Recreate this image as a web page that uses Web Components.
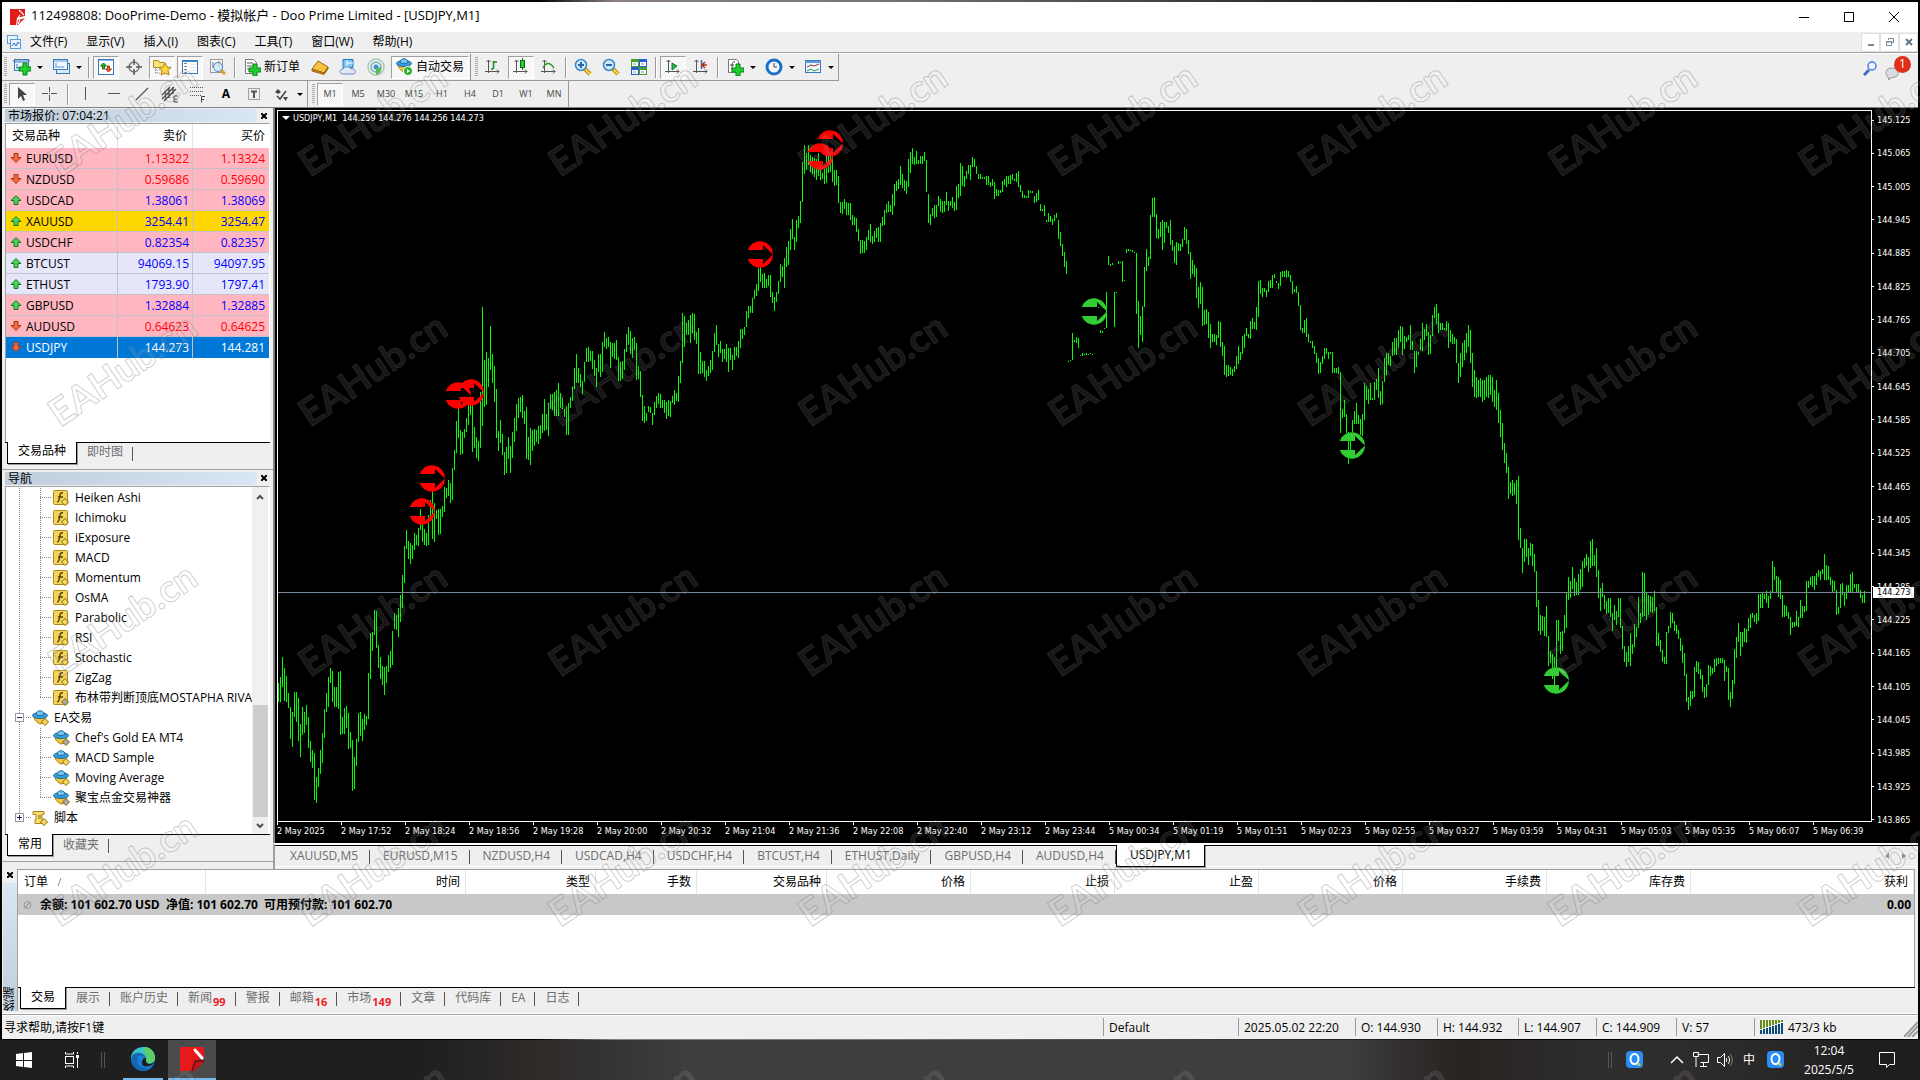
<!DOCTYPE html>
<html lang="zh-CN">
<head>
<meta charset="utf-8">
<title>112498808: DooPrime-Demo - 模拟帐户 - Doo Prime Limited - [USDJPY,M1]</title>
<style>
html, body { height: 100%; margin: 0; }
body { background: #000; font: 12px/20px "Open Sans", "Noto Sans CJK SC", sans-serif; color: #000; overflow: hidden; }
</style>
</head>
<body>
<trading-desktop></trading-desktop>
<script>
const BASE = `<style>
*{box-sizing:border-box}
:host{display:block}
button{font:inherit;color:inherit;background:none;border:0;padding:0;margin:0;display:flex;align-items:center;justify-content:center;white-space:nowrap}
svg{display:block;flex:none}
a{color:inherit;text-decoration:none}
</style>`;

function define(name, render, after) {
  customElements.define(name, class extends HTMLElement {
    connectedCallback() {
      if (this.shadowRoot) return;
      const root = this.attachShadow({ mode: 'open' });
      const t = document.createElement('template');
      t.innerHTML = BASE + render(this);
      root.append(t.content.cloneNode(true));
      if (after) after(this, root);
    }
  });
}

/* ---------- icons ---------- */
const svg = (w, h, body) => `<svg width="${w}" height="${h}" viewBox="0 0 ${w} ${h}" fill="none" aria-hidden="true">${body}</svg>`;
const PLUS = (x, y) => `<path d="M${x + 4} ${y}h4v4h4v4h-4v4h-4v-4h-4v-4h4z" fill="#1fd02c" stroke="#078012"/>`;
const AXES = '<path d="M4.500 2v13M1 13.500h14M2.500 4l2-2 2 2M13 11.500l2 2-2 2" stroke="#555"/>';
const DIA = (x, y, c) => `<path d="M${x} ${y - 3.5}l3.500 3.500-3.500 3.500-3.500-3.500z" fill="${c}" stroke="#8a6a12"/>`;
const GLASS = m => svg(18, 18, `<path d="M11 11l5 5" stroke="#b8860b" stroke-width="4"/><path d="M11 11l5 5" stroke="#ffd84a" stroke-width="2"/><circle cx="7" cy="7" r="5.500" fill="#cfe9fb" stroke="#3a86c4" stroke-width="1.500"/>${m}`);
const HAT = (x, y) => `<g transform="translate(${x} ${y})"><path d="M2 6c0 5 4 7 6 8l4-1 2-7z" fill="#f0c63a" stroke="#a88010"/><ellipse cx="8" cy="5.500" rx="7.500" ry="3" fill="#3a9edb" stroke="#1c6a9c"/><path d="M4 4.500c0-5 8-5 8 0-2 1.500-6 1.500-8 0z" fill="#74c4f0" stroke="#1c6a9c"/></g>`;
const WIN = '<rect x="1.500" y="2.500" width="15" height="12" fill="#eef6ff" stroke="#3a78b8"/><path d="M1 3h16v2H1z" fill="#5a9ad8"/>';
const ICON = {
  logo: svg(16, 16, '<path d="M0 0h9l6 0v7l-8 2-1 7H0z" fill="#e21b1b"/><path d="M15 9l-7 7h-1l1-5z" fill="#e21b1b"/><path d="M9 1l5 5M10 6l-2 3 7-1M8 15l2-4" stroke="#fff" stroke-width="1.200"/>'),
  mdi: svg(16, 16, '<rect x="1.500" y="1.500" width="10" height="8" fill="#e8f2ff" stroke="#5b9bd8"/><rect x="4.500" y="5.500" width="10" height="9" fill="#e8f2ff" stroke="#5b9bd8"/><path d="M6 12l2-3 2 3 2-4 1 2" stroke="#2c6db8"/>'),
  newchart: svg(18, 18, '<rect x="1.500" y="1.500" width="14" height="11" fill="#eef6ff" stroke="#3a78b8"/><path d="M1 2h15v2H1zM4 6v4M3 10h9" stroke="#3a78b8"/>' + PLUS(6, 5)),
  profiles: svg(18, 18, '<rect x="4.500" y="5.500" width="13" height="10" fill="#dcebfa" stroke="#3a78b8"/><rect x="1.500" y="1.500" width="14" height="10" fill="#eef6ff" stroke="#3a78b8"/><path d="M2 3h13M4 5v4M3 9h9" stroke="#5a9ad8"/>'),
  market: svg(18, 18, '<rect x="1.500" y="1.500" width="15" height="15" fill="#fff" stroke="#3a78b8"/><path d="M2 2.500h14" stroke="#8abaf0" stroke-width="1"/><path d="M6.500 5l3 3h-2v3h-2V8h-2z" fill="#2db52d" stroke="#117011"/><path d="M11.500 14l3-3h-2V8h-2v3h-2z" fill="#f06030" stroke="#a03010"/>'),
  cross: svg(18, 18, '<circle cx="9" cy="9" r="5" stroke="#777" stroke-width="1.500"/><path d="M9 1v6M9 11v6M1 9h6M11 9h6" stroke="#555" stroke-width="1.500"/>'),
  folder: svg(20, 18, '<path d="M1.500 2.500h5l1 2h5v5h-11z" fill="#fbe27a" stroke="#b8902a"/><path d="M3.500 10v5h5M3.500 12h5" stroke="#777" stroke-dasharray="1 1"/><path d="M13 5l2 4 4 .5-3 3 1 4.500-4-2-4 2 1-4.500-3-3 4-.5z" fill="#ffd840" stroke="#b07a10"/>'),
  window: svg(18, 18, '<rect x="1.500" y="2.500" width="15" height="13" fill="#fff" stroke="#3a78b8"/><path d="M2 3h14v1H2z" fill="#3a8ad8"/><path d="M4.500 5v10" stroke="#444" stroke-width="2" stroke-dasharray="1 2"/><path d="M8 6.500h7M8 9.500h7M8 12.500h7" stroke="#dde8f4"/>'),
  tester: svg(18, 18, '<rect x="1.500" y="1.500" width="12" height="13" fill="#f4f4f4" stroke="#999"/><path d="M4 4v6M10 3v6" stroke="#777"/><path d="M12 12l4 4" stroke="#d8a020" stroke-width="3"/><circle cx="9" cy="9" r="4.500" fill="#cfe6fa" fill-opacity=".8" stroke="#4a8ac0"/>'),
  order: svg(18, 18, '<path d="M2.500 1.500h8l3 3v11h-11z" fill="#fff" stroke="#777"/><path d="M4 5h6M4 8h6M4 11h4" stroke="#555"/>' + PLUS(6, 6)),
  gold: svg(18, 18, '<path d="M1 11l6-8 10 6-4 6z" fill="#f6c040" stroke="#9a6a10"/><path d="M1 11l12 4 4-6v2l-4 5.500L1 13z" fill="#c88a1a" stroke="#9a6a10"/>'),
  cloud: svg(18, 18, '<path d="M4 1.500h10v8H4z" fill="#7ec8f8" stroke="#1878c8"/><path d="M8 2v8M8 5h6" stroke="#fff"/><path d="M4 16c-4 0-4-5 0-5 1-3 7-3 8 0 5-1 6 5 2 5z" fill="#dfe9f6" stroke="#6a8ab8"/>'),
  signal: svg(20, 18, '<circle cx="10" cy="9" r="8" stroke="#a8c8b8" stroke-width="1.500"/><circle cx="10" cy="9" r="5" stroke="#7ab0b8" stroke-width="1.500"/><circle cx="10" cy="9" r="2.500" fill="#3a90d8"/><path d="M10 10v7c4-1 6-4 5-8z" fill="#5cbc5c"/>'),
  auto: svg(18, 18, HAT(1, 0) + '<circle cx="13" cy="13" r="4.500" fill="#2cb030" stroke="#fff"/><path d="M12 11l3 2-3 2z" fill="#fff"/>'),
  bars: svg(18, 18, AXES + '<path d="M9.500 3v8M7 11h2M10 4h3" stroke="#1a8a1a" stroke-width="1.500"/>'),
  candle: svg(18, 18, AXES + '<path d="M10.500 0v12" stroke="#087008"/><rect x="8.500" y="2.500" width="4" height="7" fill="#2cd03c" stroke="#087008"/>'),
  line: svg(18, 18, AXES + '<path d="M3 10c3-6 7-6 11 0" stroke="#2a9a2a" stroke-width="1.500"/>'),
  zin: GLASS('<path d="M7 4v6M4 7h6" stroke="#2868a8" stroke-width="2"/>'),
  zout: GLASS('<path d="M4 7h6" stroke="#2868a8" stroke-width="2"/>'),
  tile: svg(18, 18, '<path d="M1 1h8v8H1zM9 9h8v8H9z" fill="#4aa020"/><path d="M9 1h8v8H9zM1 9h8v8H1z" fill="#2a5ad0"/><path d="M2 4h6v4H2zM10 4h6v4h-6zM2 12h6v4H2zM10 12h6v4h-6z" fill="#f4f8ff"/><path d="M3 6h3M11 6h3M3 14h3M11 14h3" stroke="#89a"/>'),
  scroll: svg(18, 18, AXES + '<path d="M8 5l5 3-5 4z" fill="#2cb84c" stroke="#0a7a20"/>'),
  shift: svg(18, 18, AXES + '<path d="M9.500 2v9" stroke="#2868a8" stroke-width="1.500"/><path d="M15 7h-5M13 4l-3 3 3 3" stroke="#b83010" stroke-width="1.500"/>'),
  indic: svg(18, 18, '<path d="M2.500 1.500h8l2 2v11h-10z" fill="#fff" stroke="#777"/><path d="M9 4c-3-1-3 2-3 8M4 7h4" stroke="#444"/>' + PLUS(6, 6)),
  clock: svg(18, 18, '<circle cx="9" cy="9" r="7" fill="#f2f8ff" stroke="#1a70c8" stroke-width="3"/><path d="M9 5v4h3" stroke="#444"/>'),
  template: svg(18, 18, WIN + '<path d="M3 9l4-2 3 1 5-2" stroke="#a03020"/><path d="M3 13l4-2 3 2 5-2" stroke="#2a9a3a"/>'),
  cursor: svg(12, 16, '<path d="M2 1v12l3-3 2 5 2-1-2-5h4z" fill="#444"/>'),
  hair: svg(18, 18, '<path d="M8.500 2v5M8.500 10v6M1 8.500h6M10 8.500h6M8 8.500h1" stroke="#555"/>'),
  vline: svg(18, 18, '<path d="M8.500 2v13" stroke="#555"/>'),
  hline: svg(18, 18, '<path d="M3 8.500h12" stroke="#555"/>'),
  trend: svg(18, 18, '<path d="M3 15L15 3" stroke="#555" stroke-width="1.200"/>'),
  channel: svg(18, 18, '<path d="M1 14L13 2M3 16L15 4M1 10l8-8M4 6l1 9M8 3v10M12 2v7" stroke="#444" stroke-width="1.200"/><path d="M17 11h-4v6h4M13 14h3" stroke="#444"/>'),
  fibo: svg(18, 18, '<path d="M1 2.500h14M1 6.500h14M1 10.500h11" stroke="#555" stroke-dasharray="1 1"/><path d="M16 11.500h-3.500v6M12 14.500h3" stroke="#444"/>'),
  tbox: svg(18, 18, '<rect x="3.500" y="3.500" width="11" height="11" stroke="#555" stroke-dasharray="1 1"/><path d="M6 6.500h6M9 6v7" stroke="#555" stroke-width="2"/>'),
  arrows: svg(18, 18, '<path d="M2 7l3-3 3 3-3 2zM10 12h5l-2.500 4z" fill="#444"/><path d="M4 11l3 3 6-8" stroke="#444" stroke-width="1.500"/>'),
  search: svg(16, 16, '<path d="M6 10l-5 5" stroke="#3a68c8" stroke-width="3"/><circle cx="9" cy="6" r="4" fill="#eef4ff" stroke="#4a7ae0" stroke-width="1.500"/>'),
  down: svg(12, 12, '<path d="M4 1.500h4v4h3L6 10.500 1 5.500h3z" fill="#f06840" stroke="#a83c14"/>'),
  up: svg(12, 12, '<path d="M4 10.500h4v-4h3L6 1.500 1 6.500h3z" fill="#4cd060" stroke="#147a20"/>'),
  fx: svg(16, 16, '<rect x=".5" y=".5" width="14" height="14" rx="1" fill="#f2d45c" stroke="#b08a1a"/><path d="M10 3c-3-1-3 2-3.500 5S5 12 4 12M5 7h5" stroke="#5a4608" stroke-width="1.500"/>' + DIA(12, 12, '#f6d860')),
  fxg: svg(16, 16, '<rect x=".5" y=".5" width="14" height="14" rx="1" fill="#f2d45c" stroke="#b08a1a"/><path d="M10 3c-3-1-3 2-3.500 5S5 12 4 12M5 7h5" stroke="#5a4608" stroke-width="1.500"/>' + DIA(12, 12, '#a8a8a8')),
  ea: svg(17, 16, HAT(0, 0) + DIA(13, 12, '#f6d860')),
  eag: svg(17, 16, HAT(0, 0) + DIA(13, 12, '#a8a8a8')),
  script: svg(16, 16, '<path d="M1 1.500h11v3h-2v5h3v4H3v-4h1v-5H1z" fill="#f8dc70" stroke="#a8841a"/><path d="M6 6h3M6 8h3" stroke="#86680e"/>' + DIA(12, 12, '#f6d860')),
  q: svg(18, 18, '<rect width="17" height="17" rx="4" fill="#2a8cf4"/><ellipse cx="8.500" cy="8" rx="4" ry="5" stroke="#fff" stroke-width="2"/><circle cx="13" cy="13.500" r="1.500" fill="#a8e040"/>'),
  start: svg(16, 16, '<path d="M0 2l7-1v7H0zM8 1l8-1v8H8zM0 9h7v6l-7-1zM8 9h8v7l-8-1z" fill="#fff"/>'),
  tasks: svg(18, 18, '<rect x="2.500" y="5.500" width="8" height="7" stroke="#fff"/><path d="M2.500 1v2h8V1M2.500 17v-2h8v2M14.500 1v2M14.500 7v10" stroke="#fff"/><path d="M13 4h3v3h-3z" fill="#fff"/>'),
  edge: svg(26, 26, '<circle cx="13" cy="13" r="12" fill="#1a7fd4"/><path d="M1 12C2-2 25-3 25 12c0 6-8 7-9 3 2-5-5-7-8-3-2 0-5 1-7 0z" fill="#3ac4c8"/><path d="M14 1c8 0 11 6 11 11 0 6-8 7-9 3 3-3-2-6-2-14z" fill="#5cd068"/><path d="M8 12c-3 6 3 12 13 10-5 5-18 4-20-9 1-5 4-7 9-6 3 0 6 3 6 6-2-4-7-4-8-1z" fill="#1466b4"/><path d="M16 15c0 4 6 4 9 0-2 6-14 8-13 1 0-3 2-4 4-4z" fill="#1e1e1e"/>'),
  doo: svg(24, 24, '<path d="M0 0h24v12l-9 1-4 11H0z" fill="#e8191b"/><path d="M24 13v2l-9 9h-3l3-10z" fill="#c41416"/><path d="M15 3l7 8" stroke="#fff" stroke-width="3" stroke-linecap="round"/><path d="M12 24l3-10h9" stroke="#3a0a0a"/>'),
  net: svg(18, 18, '<path d="M5.500 3.500h11v8h-8M11.500 12v3M8 15.500h7M1.500 1.500h5v4h-5zM4 6v10" stroke="#fff"/>'),
  vol: svg(18, 18, '<path d="M1.500 6.500h3l4-4v13l-4-4h-3z" stroke="#fff"/><path d="M10 7c1 1 1 3 0 4M12 5c2 2 2 6 0 8" stroke="#fff"/><path d="M14 3c3 3 3 9 0 12" stroke="#888"/>'),
  chev: svg(14, 14, '<path d="M1 10l6-6 6 6" stroke="#fff" stroke-width="1.500"/>'),
  note: svg(18, 18, '<path d="M1.500 1.500h15v12h-5l-3 3v-3h-7z" stroke="#fff"/>'),
};
ICON.volume = svg(24, 14, Array.from({ length: 8 }, (_, i) => `<path d="M${i * 3 + 1} 0v${9 - i}" stroke="#6a8a1a" stroke-width="2"/><path d="M${i * 3 + 1} ${10 - i}V14" stroke="#0a4a78" stroke-width="2"/>`).join(''));

/* ---------- window chrome ---------- */
define('title-bar', () => `<style>
:host{display:flex;height:30px;background:#fff;align-items:center;padding:0 2px 0 8px}
.t{flex:1;padding-left:5px;height:28px;font-size:13px;line-height:24px}
button{width:45px;height:30px}
</style>${ICON.logo}<div class="t"><slot></slot></div>
<button aria-label="最小化">${svg(10, 10, '<path d="M0 5.500h10" stroke="#000"/>')}</button>
<button aria-label="最大化">${svg(10, 10, '<path d="M.5.5h9v9h-9z" stroke="#000"/>')}</button>
<button aria-label="关闭">${svg(10, 10, '<path d="M0 0l10 10M10 0L0 10" stroke="#000"/>')}</button>`);

define('menu-bar', () => `<style>
:host{display:flex;height:21px;background:#efefef;border-bottom:1px solid #a0a0a0;align-items:center;padding-left:4px}
nav{display:flex;gap:19px;padding-left:8px;flex:1;line-height:18px}
.m{width:19px;height:19px;background:#fff;border:1px solid #e0e0e0}
</style>${ICON.mdi}<nav>${['文件(F)', '显示(V)', '插入(I)', '图表(C)', '工具(T)', '窗口(W)', '帮助(H)'].map(t => `<button>${t}</button>`).join('')}</nav>
<button class="m" aria-label="最小化图表">${svg(10, 10, '<path d="M2 8h6" stroke="#789" stroke-width="2"/>')}</button>
<button class="m" aria-label="还原图表">${svg(10, 10, '<path d="M3.500 3V1.500h5v4H7M1.500 4.500h5v4h-5zM1 5h6" stroke="#789"/>')}</button>
<button class="m" aria-label="关闭图表">${svg(10, 10, '<path d="M2 2l6 6M8 2L2 8" stroke="#678" stroke-width="2"/>')}</button>`);

define('tool-grip', () => `<style>:host{width:3px;height:20px;margin:0 1px 0 2px;background:repeating-linear-gradient(#aaa 0 1px,#efefef 1px 2px)}</style>`);
define('tool-sep', () => `<style>:host{width:2px;height:21px;margin:0 2px;background:linear-gradient(90deg,#999 50%,#fff 50%)}:host([wide]){margin:0 3px}</style>`);
define('tool-button', el => `<style>
:host{flex:none;width:26px;margin:0 1px}
:host([menu]){width:35px;margin:0 2px}
:host([label]){width:auto}
button{width:100%;height:23px;border:1px solid transparent;gap:3px}
:host([pressed]) button{background:repeating-conic-gradient(#fff 0 25%,#f0f0f0 0 50%) 0 0/2px 2px;border-color:#a0a0a0 #fff #fff #a0a0a0}
:host([text]) button{font-size:9px;color:#444}
:host([label]) button{padding:0 4px 0 3px}
i{width:0;border:3px solid transparent;border-top-color:#000;border-bottom:0;margin-left:3px}
b{font-size:12px;color:#555;font-weight:600}
</style><button ${el.hasAttribute('label') || el.hasAttribute('text') ? '' : `aria-label="${el.getAttribute('icon')}"`} ${el.hasAttribute('pressed') ? 'aria-pressed="true"' : ''}>${ICON[el.getAttribute('icon')] || ''}${el.getAttribute('label') || el.getAttribute('text') || ''}<slot></slot>${el.hasAttribute('menu') ? '<i></i>' : ''}</button>`);

define('tool-row', () => `<style>
:host{display:flex;height:27px;align-items:center;background:#efefef}
:host([last]){height:26px}
.g{display:flex;height:100%;align-items:center;border-right:1px solid #999;border-bottom:1px solid #999}
:host([last]) .g{border-bottom:0}
.g+.g{padding-left:2px}
</style><div class="g"><slot></slot></div><div class="g"><slot name="second"></slot></div><slot name="end"></slot>`);

define('alert-tools', () => `<style>
:host{display:flex;margin-left:auto;gap:6px;padding-right:5px;align-items:center}
.c{position:relative;width:28px;height:24px;align-items:end;justify-content:start}
span{position:absolute;right:2px;top:0;width:17px;height:17px;border-radius:9px;background:#e0301c;color:#fff;line-height:16px;text-align:center}
</style><button aria-label="搜索">${ICON.search}</button><button class="c">${svg(14, 14, '<path d="M3 11c-4-3-2-9 4-9s9 7 3 9l-5 1-1 2z" fill="#dcdce4" stroke="#999"/>')}<span>1</span></button>`);

define('main-toolbars', () => {
  const b = (icon, extra = '') => `<tool-button icon="${icon}" ${extra}></tool-button>`;
  const tf = (t, p = '') => `<tool-button text="${t}" ${p}></tool-button>`;
  return `<style>:host{background:#efefef;border-top:1px solid #fff;border-bottom:1px solid #808080}
.s{display:flex;height:26px;align-items:center}</style>
<tool-row><div class="s"><tool-grip></tool-grip>${b('newchart', 'menu')}${b('profiles', 'menu')}<tool-sep></tool-sep>${b('market', 'pressed')}${b('cross')}${b('folder', 'pressed')}${b('window', 'pressed')}${b('tester')}<tool-sep></tool-sep>${b('order', 'label="新订单"')}${b('gold')}${b('cloud')}${b('signal')}${b('auto', 'pressed label="自动交易"')}</div>
<div class="s" slot="second"><tool-grip></tool-grip>${b('bars')}${b('candle', 'pressed')}${b('line')}<tool-sep></tool-sep>${b('zin')}${b('zout')}${b('tile')}<tool-sep></tool-sep>${b('scroll', 'pressed')}${b('shift')}<tool-sep></tool-sep>${b('indic', 'menu')}${b('clock', 'menu')}${b('template', 'menu')}</div>
<alert-tools slot="end"></alert-tools></tool-row>
<tool-row last><div class="s"><tool-grip></tool-grip>${b('cursor', 'pressed')}${b('hair')}<tool-sep wide></tool-sep>${b('vline')}${b('hline')}${b('trend')}${b('channel')}${b('fibo')}<tool-button icon="text"><b>A</b></tool-button>${b('tbox')}${b('arrows', 'menu')}</div>
<div class="s" slot="second"><tool-grip></tool-grip>${tf('M1', 'pressed')}${['M5', 'M30', 'M15', 'H1', 'H4', 'D1', 'W1', 'MN'].map(t => tf(t)).join('')}</div></tool-row>`;
});

/* ---------- tabs and docked panels ---------- */
define('tab-strip', el => {
  const tabs = el.getAttribute('tabs').split('|'), on = +(el.getAttribute('active') || 0);
  return `<style>
:host{display:flex;height:24px;background:#efefef;padding-left:2px;border-top:1px solid #000}
button{height:21px;padding:0 var(--pad,10px) 2px var(--lead,10px);color:#6e6e6e;position:relative;line-height:18px}
button:not(.on)::after{content:"";position:absolute;right:0;top:4px;height:14px;border-right:1px solid #555}
.on{background:#fff;color:#000;border:1px solid #000;border-top:0;margin-top:-1px;height:22px;box-shadow:1px 1px #999}
small{font-size:11px;font-weight:700;color:#ee1c24;line-height:10px;align-self:end;margin-left:1px}
</style>${tabs.map((t, i) => { const [n, c] = t.split('#'); return `<button role="tab" aria-selected="${i === on}" class="${i === on ? 'on' : ''}">${n}${c ? `<small>${c}</small>` : ''}</button>`; }).join('')}<slot></slot>`;
});

define('dock-panel', el => `<style>
:host{display:flex;flex-direction:column;background:#efefef;padding:1px 3px 3px;min-height:0}
:host([ruled]){border-top:1px solid #a0a0a0;padding-top:2px}
header{display:flex;height:13px;line-height:13px;margin-bottom:1px}
h2{margin:0;flex:1;font:inherit;padding-left:3px;background:linear-gradient(90deg,#bfcddb,#d9e6f3)}
button{width:13px}
.b{flex:1;min-height:0;background:#fff;border:1px solid #a0a0a0;border-right-color:#fff;border-bottom:0;overflow:hidden;display:flex;flex-direction:column}
.b ::slotted(*){flex:1;min-height:0}
</style><header><h2>${el.getAttribute('heading')}</h2><button aria-label="关闭">${svg(6, 6, '<path d="M0 0l6 6M6 0L0 6" stroke="#000" stroke-width="2"/>')}</button></header>
<div class="b"><slot></slot></div><tab-strip tabs="${el.getAttribute('tabs')}"></tab-strip>`);

const QUOTES = [
  ['EURUSD', '1.13322', '1.13324', 0, 'p'], ['NZDUSD', '0.59686', '0.59690', 0, 'p'], ['USDCAD', '1.38061', '1.38069', 1, 'p'],
  ['XAUUSD', '3254.41', '3254.47', 1, 'g'], ['USDCHF', '0.82354', '0.82357', 1, 'p'], ['BTCUST', '94069.15', '94097.95', 1, 'l'],
  ['ETHUST', '1793.90', '1797.41', 1, 'l'], ['GBPUSD', '1.32884', '1.32885', 1, 'p'], ['AUDUSD', '0.64623', '0.64625', 0, 'p'],
  ['USDJPY', '144.273', '144.281', 0, 's']];
define('market-watch', () => `<style>
table{width:100%;border-collapse:separate;border-spacing:0;table-layout:fixed}
th{font-weight:400;height:24px;padding:0 5px;text-align:right;border-right:1px solid #e4e4e4;line-height:20px}
th:first-child{text-align:left;width:112px;padding-left:6px}
td{height:21px;padding:0 3px 0 0;line-height:19px;text-align:right;color:#f00;border-right:1px solid #c8c0c8;border-bottom:1px solid #c8c0c8}
th:nth-child(2){width:75px}
td:last-child,th:last-child{padding-right:4px;border-right:0}
td:first-child{color:#000}
.n{display:flex;align-items:center;gap:4px;padding-left:4px;height:20px}
.u td+td{color:#00f}
.p{background:#ffb6c1}.g{background:#ffd700}.l{background:#e6e6fa}.s{background:#0078d7}
tr.s td{color:#fff;border-bottom-color:#0078d7}
</style><table><thead><tr><th>交易品种</th><th>卖价</th><th>买价</th></tr></thead><tbody>
${QUOTES.map(q => `<tr class="${q[4]} ${q[3] ? 'u' : ''}"><td><div class="n">${q[3] ? ICON.up : ICON.down}<span>${q[0]}</span></div></td><td>${q[1]}</td><td>${q[2]}</td></tr>`).join('')}
</tbody></table>`);

define('tree-row', el => {
  const lv = el.getAttribute('level'), box = el.getAttribute('box'), last = el.hasAttribute('last');
  return `<style>
:host{display:flex;height:20px;align-items:center;white-space:nowrap;padding-left:13px}
.v{flex:none;width:21px;height:20px;background:repeating-linear-gradient(#888 0 1px,transparent 1px 2px) 0 0/1px 100% no-repeat;display:flex;align-items:center}
.v.last{background-size:1px 50%}
.h{width:12px;height:1px;background:repeating-linear-gradient(90deg,#888 0 1px,transparent 1px 2px)}
.w{width:13px}
.x{width:9px;height:9px;border:1px solid #999;background:#fff;margin-left:-4px;margin-right:2px;flex:none}
.i{flex:none;width:17px;margin-right:5px}
</style>${lv === '2'
    ? `<div class="v"></div><div class="v w ${last ? 'last' : ''}"><div class="h"></div></div>`
    : `<div class="v w ${last ? 'last' : ''}"><button class="x" aria-label="展开">${svg(7, 7, `<path d="M1 3.500h5${box === '+' ? 'M3.500 1v5' : ''}" stroke="#226"/>`)}</button><div class="h"></div></div>`}<span class="i">${ICON[el.getAttribute('icon')]}</span><slot></slot>`;
});

define('nav-tree', () => `<style>
:host{display:flex;height:100%}
.t{flex:1;min-width:0;overflow:hidden;padding-top:1px}
.s{width:16px;background:#f0f0f0;display:flex;flex-direction:column;align-items:center;padding:7px 0 5px;margin-right:1px}
.k{width:15px;height:112px;background:#cdcdcd;margin-top:auto;margin-bottom:6px}
</style><div class="t" role="tree">
${['Heiken Ashi', 'Ichimoku', 'iExposure', 'MACD', 'Momentum', 'OsMA', 'Parabolic', 'RSI', 'Stochastic', 'ZigZag'].map(t => `<tree-row level="2" icon="fx">${t}</tree-row>`).join('')}
<tree-row level="2" icon="fxg" last>布林带判断顶底MOSTAPHA RIVA</tree-row>
<tree-row level="1" box="-" icon="ea">EA交易</tree-row>
<tree-row level="2" icon="eag">Chef's Gold EA MT4</tree-row><tree-row level="2" icon="ea">MACD Sample</tree-row><tree-row level="2" icon="ea">Moving Average</tree-row><tree-row level="2" icon="eag" last>聚宝点金交易神器</tree-row>
<tree-row level="1" box="+" icon="script" last>脚本</tree-row></div>
<div class="s">${svg(8, 6, '<path d="M1 5l3-3 3 3" stroke="#505050" stroke-width="2"/>')}<div class="k"></div>${svg(8, 6, '<path d="M1 1l3 3 3-3" stroke="#505050" stroke-width="2"/>')}</div>`);

/* ---------- chart ---------- */
/* Each run: origin x, x units per pixel, origin y, then bar triples x,high,low at three units per pixel. */
const RUNS = [
[270, 2.45, 470, '20,640,695 25,620,695 30,560,652 35,595,692 40,618,695 45,668,715 50,710,808 55,727,830 60,665,742 65,667,755 70,685,812 75,762,862 80,710,795 85,727,788 90,705,765 95,740,835 100,812,875 104,840,895 109,850,990 114,920,1000 119,893,950 124,840,912 128,790,880 133,717,805 138,670,725 143,620,710 148,594,638 153,603,695 158,650,710 163,650,712 168,605,718 173,602,794 178,740,792 183,713,792 187,708,775 192,728,836 197,785,833 202,810,962 207,860,957 212,808,887 217,728,815 222,727,798 226,747,812 231,732,780 236,738,765 241,610,748 246,488,628 251,485,542 256,420,494 261,423,533 266,525,594 270,560,628 275,588,644 280,592,674 285,588,640 290,555,605 295,543,594 300,483,584 305,430,477 310,436,480 315,413,500 320,375,455 324,315,413 329,228,340 334,180,238 339,213,266 344,219,281 349,225,266 354,188,240 359,195,225 364,174,228 368,118,180 373,163,215 378,178,225 383,189,228 388,136,225 393,90,145 398,60,206 403,100,215 408,120,147 412,117,194 417,117,191 422,108,140 427,51,125 432,54,85 437,30,77 442,40,98 447,-5,90'],
[270, 2.45, 105, '452,1035,1095 457,948,1045 461,910,1000 466,975,1050 471,980,1046 476,972,1000 481,940,980 486,900,960 491,880,930 496,900,1042 501,967,1028 506,995,1058 511,1008,1067 515,860,1030 520,605,962 525,765,905 530,740,900 535,758,845 540,663,795 545,747,835 550,783,890 555,852,998 560,978,1037 564,945,1014 569,987,1050 574,1040,1110 579,1025,1103 584,995,1063 589,1022,1103 594,980,1058 599,938,1010 603,898,977 608,878,938 613,876,922 618,870,940 623,918,958 628,905,1061 633,995,1065 638,968,1080 643,975,1037 648,972,1022 653,975,1010 658,963,1017 663,960,1003 668,927,985 673,881,978 678,927,975 683,895,992 687,866,912 692,866,915 697,860,932 702,855,932 707,833,932 712,865,908 717,880,912 722,912,935 727,905,990 731,893,990 736,877,908 741,845,887 746,788,853 751,747,835 756,788,833 761,806,845 766,827,866 771,770,830 776,730,770 780,726,770 785,737,769 790,737,792 795,765,812 800,788,845 805,747,800 810,747,815 815,712,800 820,681,727 824,698,732 829,695,725 834,711,788 839,714,755 844,714,762 849,705,765 854,756,827 859,770,827 864,768,822 868,731,795 873,687,740 878,666,720 883,678,747 888,698,758 893,695,735 898,714,824 903,783,821 908,797,877 912,870,947 917,903,953 922,923,948 927,902,920 932,905,925 937,923,959 942,890,930 947,872,910 952,863,896 957,866,908 962,884,908 967,884,925 972,890,942 976,884,933 981,887,935 986,872,893 991,855,900 996,864,887 1001,812,890 1006,767,833 1010,623,773 1015,633,725 1020,653,690 1025,645,690 1030,630,713 1035,624,683 1040,628,705 1045,681,717 1050,670,806 1055,740,806 1060,768,805 1065,767,815 1069,795,827 1074,783,812 1079,765,805 1084,738,795 1089,684,740 1093,660,720 1098,717,755 1103,708,743 1108,731,770 1113,732,762 1118,717,770 1123,728,800 1128,730,766 1133,750,795 1138,726,765 1143,726,753 1148,708,760 1153,672,728 1158,672,703 1162,666,690 1167,618,665 1172,603,638 1177,603,624 1182,578,624 1187,555,583 1192,537,573 1197,488,557 1202,480,530 1206,507,548 1211,504,548 1216,522,548 1221,510,543 1226,510,575 1231,560,593 1236,576,617 1241,560,590 1246,528,566 1250,477,531 1256,483,515 1260,459,548 1265,426,486 1270,407,480 1275,372,434 1280,342,402 1285,396,434 1290,345,410 1295,333,368 1299,288,353 1304,170,290 1309,120,206 1314,143,194 1319,120,180 1324,150,200 1329,157,207 1334,158,215 1339,163,225 1344,143,213 1349,190,225 1354,203,222 1358,190,236 1363,150,234 1368,150,205 1373,140,200 1378,150,230 1383,195,242 1388,195,240 1393,212,293 1398,291,323 1402,291,327 1407,281,312 1412,291,329 1417,293,329 1422,293,345 1427,330,360 1432,336,360 1437,339,380 1442,372,407 1446,405,446 1451,405,443 1456,407,443 1461,395,434 1466,375,405 1471,357,410 1476,393,416 1481,378,412 1486,369,398 1491,366,410 1495,353,410 1500,336,363 1505,314,360 1510,296,324 1515,288,321 1520,300,321 1525,266,329 1530,237,303 1535,228,257 1540,222,252 1544,183,240 1549,207,248 1554,225,257 1559,228,266 1564,162,245'],
[900, 2.8, 105, '29,141,203 35,129,178 40,155,180 46,138,177 51,165,177 57,153,177 62,153,177 68,141,168 74,165,261 80,267,353 85,327,360 91,308,332 96,300,339 102,300,335 107,273,303 113,281,321 119,288,324 124,288,321 130,261,300 136,288,318 141,288,303 147,276,309 152,291,318 158,243,315 163,237,278 169,174,272 175,183,242 180,213,245 186,198,222 191,180,207 197,180,225 203,156,185 208,162,186 214,183,207 219,207,221 225,207,221 230,216,221 236,216,221 242,213,240 247,213,239 253,230,245 258,222,242 264,231,282 270,252,272 275,254,272 281,254,263 287,228,260 292,222,240 298,213,245 303,213,237 309,210,237 315,207,225 320,222,227 326,204,230 331,198,245 337,240,262 342,258,279 348,270,278 354,272,278 359,255,278 365,258,263 370,258,263 376,272,293 382,263,290 387,255,284 393,297,318 398,312,318 404,300,333 410,345,350 415,324,350 421,333,350 427,342,360 432,330,347 438,324,340 443,345,402 449,381,423 454,417,453 460,440,486 466,468,507 471,768,770 477,765,768 483,684,765 488,705,710 494,696,714 499,699,728 505,750,753 510,744,752 516,747,750 521,745,750 527,747,749 533,744,747 538,747,749 555,606,609 561,675,684 566,678,684 572,669,672 578,561,668 583,453,480 589,477,483 594,474,480 600,561,665 606,561,564 611,468,476 617,471,474 622,468,530 628,525,528 634,432,444 639,432,438 645,435,438 650,435,440 656,441,443 662,444,627 667,588,728 673,633,690 678,603,710 684,486,606 690,432,497 695,456,483 701,330,461 707,279,335 712,276,335 718,327,398 723,372,402 729,351,396 735,345,434 740,351,413 746,351,370 751,363,383 757,345,420 763,405,437 768,423,474 774,411,480 779,413,437 785,417,437 791,402,426 796,366,405 802,372,417 807,405,447 813,441,522 819,465,507 824,480,516 830,489,578 835,546,608 841,531,597 847,546,662 852,615,659 858,612,656 863,621,699 869,657,728 874,687,710 880,687,711 886,690,720 891,648,698 897,651,725 903,711,752 908,723,810 914,780,815 919,780,812 925,786,810 930,792,812 936,783,801 942,752,791 947,723,777 953,741,764 959,693,746 964,687,728 970,669,693 975,687,699 981,648,701 987,639,671 992,651,672 998,606,674 1003,528,635 1009,525,567 1015,549,575 1020,549,560 1026,555,575 1031,528,560 1037,525,548 1043,510,550 1048,507,520 1054,528,533 1059,534,552 1065,501,543 1070,498,516 1076,498,516 1082,495,518 1087,498,516 1093,510,530 1099,528,567 1104,552,562 1110,543,563 1115,561,602 1121,600,674 1127,669,683 1132,645,684 1138,639,696 1143,687,710 1149,708,714 1155,708,728 1160,723,746 1166,744,773 1171,759,806 1177,771,803 1182,753,776 1188,729,762 1194,729,747 1199,741,762 1205,741,746 1210,741,803 1216,789,803 1222,789,803 1227,786,806 1233,801,984 1239,912,938 1244,885,935 1250,927,984 1255,980,1077 1261,1000,1035 1266,945,980 1272,918,957 1278,894,957 1283,930,957 1289,942,990 1294,927,992 1300,834,944 1306,843,884 1311,852,896 1317,834,885 1323,879,885 1328,831,884 1334,822,855 1339,789,878 1345,858,899 1350,828,896 1356,759,830 1362,744,811 1367,744,780 1373,753,783 1378,711,753 1384,699,750 1390,699,750 1395,675,728 1401,663,710 1406,666,750 1412,693,732 1417,696,712 1423,690,704 1429,660,735 1434,708,735 1440,738,803 1446,738,786 1451,741,750 1457,702,735 1462,654,737 1468,672,705 1474,657,694 1479,681,750 1485,690,746 1490,630,693 1496,606,638 1502,597,656 1507,624,683 1513,654,674 1518,654,674 1524,669,675 1530,648,678 1535,654,728 1541,675,710 1546,687,716 1552,696,717 1558,702,773 1563,774,833'],
[1440, 3, 470, '205,-10,87 211,35,72 217,30,77 223,40,75 229,30,101 235,18,210 241,175,235 247,235,308 253,207,275 259,207,260 265,235,286 271,219,258 277,222,288 283,252,306 289,303,410 295,390,482 301,435,494 307,438,483 313,441,498 319,408,500 325,498,588 331,543,580 337,552,627 343,560,655 349,450,605 355,450,512 361,487,552 367,484,542 373,435,490 379,367,473 385,321,390 391,333,384 397,291,357 403,324,377 409,336,374 415,312,374 421,296,360 427,273,350 433,264,294 439,252,287 445,260,305 451,213,293 457,207,288 463,255,288 469,234,321 475,300,384 481,354,422 487,340,380 493,376,417 499,393,431 505,384,430 511,385,440 517,430,483 523,405,450 529,423,465 535,384,441 541,384,473 547,468,537 553,528,575 559,546,590 565,528,577 571,489,588 577,522,552 583,463,530 589,471,500 595,381,473 601,430,458 607,306,440 613,309,438 619,370,450 625,375,435 631,378,425 637,381,430 643,364,422 649,411,528 655,489,527 661,510,546 667,540,576 673,561,581 679,487,581 685,468,490 691,426,473 697,429,460 703,453,482 709,465,493 715,480,507 721,504,543 727,525,578 733,549,618 739,612,696 745,681,719 751,663,707 757,663,687 763,591,681 769,573,605 775,576,612 781,597,627 787,615,665 793,651,684 799,642,682 805,585,645 811,588,618 817,594,611 823,567,607 829,564,588 835,564,583 841,564,579 847,564,579 853,570,632 859,588,606 865,594,690 871,666,711 877,630,686 883,538,641 889,501,563 895,459,515 901,487,557 907,487,530 913,474,515 919,477,518 925,444,482 931,432,473 937,430,443 943,435,455 949,430,462 955,372,452 961,372,413 967,369,413 973,372,388 979,364,398 985,378,413 991,364,387 997,273,368 1003,291,330 1009,318,365 1015,321,380 1021,330,387 1027,375,440 1033,405,440 1039,408,437 1045,426,446 1051,441,494 1057,456,473 1063,456,470 1069,423,468 1075,441,470 1081,390,444 1087,408,443 1093,408,426 1099,333,422 1105,333,353 1111,321,345 1117,318,350 1123,318,359 1129,309,344 1135,300,321 1141,303,329 1147,297,312 1153,252,329 1159,285,330 1165,288,329 1171,321,344 1177,330,365 1183,333,362 1189,360,435 1195,411,432 1201,342,413 1207,339,375 1213,366,407 1219,345,388 1225,345,366 1231,312,366 1237,306,368 1243,342,354 1249,342,366 1255,342,368 1261,360,384 1267,375,398 1273,364,399'],
[1440, 3, 330, '61,70,140 67,40,110 73,30,90 79,10,70 85,-15,50 91,0,100 97,70,170 103,120,200 109,140,205 115,150,200 121,145,200 127,150,215 133,150,210 139,140,200 145,135,205 151,135,195 157,140,215 163,180,230 169,150,240 175,190,280 181,240,320 187,280,360 193,340,400 199,370,430']
];
const MARKS = [[422, 511], [432, 478], [458, 395], [471, 392], [760, 254], [830, 143], [820, 156], [1094, 311, 1], [1352, 445, 1], [1556, 680, 1]];
const PRICES = Array.from({ length: 22 }, (_, i) => (145.125 - i * 0.06).toFixed(3));
const TIMES = '2 May 2025|2 May 17:52|2 May 18:24|2 May 18:56|2 May 19:28|2 May 20:00|2 May 20:32|2 May 21:04|2 May 21:36|2 May 22:08|2 May 22:40|2 May 23:12|2 May 23:44|5 May 00:34|5 May 01:19|5 May 01:51|5 May 02:23|5 May 02:55|5 May 03:27|5 May 03:59|5 May 04:31|5 May 05:03|5 May 05:35|5 May 06:07|5 May 06:39'.split('|');
define('price-chart', () => {
  let d = '';
  for (const [ox, sx, oy, pts] of RUNS)
    for (const p of pts.split(' ')) {
      const [x, h, l] = p.split(',').map(Number);
      const bx = 2 * Math.round((ox + x / sx - 0.4) / 2), top = Math.round(oy + h / 3);
      d += `M${bx + 0.5} ${top}V${Math.max(top + 1, Math.round(oy + l / 3))}`;
    }
  return `<style>
:host{display:grid;grid-template:1fr 21px/1fr 46px;background:#000;color:#fff;padding:2px 0 0 2px;border-left:2px solid #808080;font:9px/12px "DejaVu Sans Condensed","Open Sans",sans-serif;min-height:0;min-width:0}
.p{position:relative;border:1px solid #fff;overflow:hidden}
.p svg{position:absolute;left:0;top:0}
.o{position:absolute;left:4px;top:1px;display:flex;gap:3px;align-items:center;white-space:pre}
i{border:4px solid transparent;border-top-color:#fff;border-bottom:0}
.y{position:relative;display:flex;flex-direction:column;justify-content:space-between;padding:4px 0 0;margin-bottom:-4px}
.y span{display:flex;align-items:center;gap:3px}
.y span::before{content:"";width:2px;height:1px;background:#fff}
.y .now{position:absolute;left:1px;right:4px;top:477px;background:#fff;color:#000;padding-left:4px;height:11px;line-height:11px}
.y .now::before{content:none}
.x{display:flex;overflow:hidden;grid-column:1/3}
.x span{flex:0 0 64px;white-space:nowrap;padding-top:3px;background:linear-gradient(#fff,#fff) 0 0/1px 3px no-repeat}
</style><div class="p"><svg width="100%" height="100%" fill="none"><g transform="translate(-278 -111)"><path d="${d}" stroke="#0f0"/>
${MARKS.map(([x, y, g]) => `<path transform="translate(${x} ${y}.500)" d="M-12.300-4.500A13 13 0 0 1 13 0L3-9.500v5zM-12.300 4.500A13 13 0 0 0 13 0L3 9.500v-5z" fill="${g ? '#32cd32' : '#f00'}"/>`).join('')}
<path d="M278 592.500H3000" stroke="#778899"/></g></svg><div class="o"><i></i><span>USDJPY,M1  144.259 144.276 144.256 144.273</span></div></div>
<div class="y">${PRICES.map(p => `<span>${p}</span>`).join('')}<span class="now">144.273</span></div>
<div class="x">${TIMES.map(t => `<span>${t}</span>`).join('')}</div>`;
});

/* ---------- terminal, status, taskbar ---------- */
define('terminal-panel', () => {
  const cols = [['时间', 260], ['类型', 130], ['手数', 101], ['交易品种', 130], ['价格', 144], ['止损', 144], ['止盈', 144], ['价格', 144], ['手续费', 144], ['库存费', 144], ['获利', 0]];
  return `<style>
:host{display:flex;height:145px;background:#efefef;border-bottom:1px solid #fff;padding:0 3px 2px 1px}
.l{width:14px;display:flex;flex-direction:column;align-items:center}
.l button{height:12px;margin-bottom:2px}
.l h2{flex:1;margin:0;width:14px;font:inherit;line-height:14px;writing-mode:vertical-rl;transform:rotate(180deg);background:linear-gradient(#bfcddb,#d9e6f3)}
.m{flex:1;display:flex;flex-direction:column;background:#fff;border:1px solid #a0a0a0;border-bottom:0;min-width:0}
table{border-collapse:separate;border-spacing:0;table-layout:fixed;width:100%}
th{font-weight:400;text-align:right;padding:0 5px;height:24px;border-right:1px solid #e4e4e4}
th:first-child{text-align:left;width:188px;padding-left:6px}
td{height:21px;background:#c8c8c8;font-weight:700;padding:0 3px 0 5px;line-height:20px;white-space:pre}
td:last-child{text-align:right}
.r{display:flex;align-items:center;gap:8px}
tab-strip{margin:auto -1px 0 0}
</style><div class="l"><button aria-label="关闭">${svg(6, 6, '<path d="M0 0l6 6M6 0L0 6" stroke="#000" stroke-width="2"/>')}</button><h2>终端</h2></div>
<div class="m"><table><thead><tr><th>订单 &nbsp; <svg width="5" height="8" viewBox="0 0 5 8" style="display:inline"><path d="M1 8l3-8" stroke="#888"/></svg></th>${cols.map(([t, w]) => `<th${w ? ` style="width:${w}px"` : ''}>${t}</th>`).join('')}</tr></thead>
<tbody><tr><td colspan="11"><div class="r">${svg(9, 10, '<circle cx="4.500" cy="5" r="3.500" stroke="#999"/><path d="M2 8l5-6" stroke="#888"/>')}<span>余额: 101 602.70 USD  净值: 101 602.70  可用预付款: 101 602.70</span></div></td><td>0.00</td></tr></tbody></table>
<tab-strip tabs="交易|展示|账户历史|新闻#99|警报|邮箱#16|市场#149|文章|代码库|EA|日志"></tab-strip></div>`;
});

define('status-bar', () => `<style>
:host{display:flex;height:25px;background:#efefef;border-top:1px solid #a0a0a0;box-shadow:inset 0 1px #fff;align-items:center;padding-left:2px}
span{height:18px;line-height:17px;border-left:1px solid #999;padding-left:5px;display:flex;align-items:center;gap:4px}
.f{flex:1;border:0;padding:0}
</style><span class="f">寻求帮助,请按F1键</span>${[['Default', 135], ['2025.05.02 22:20', 117], ['O: 144.930', 82], ['H: 144.932', 81], ['L: 144.907', 78], ['C: 144.909', 80], ['V: 57', 78]].map(([t, w]) => `<span style="width:${w}px">${t}</span>`).join('')}
<span style="width:150px">${ICON.volume}473/3 kb</span>${svg(14, 20, '<path d="M0 20L14 5M4 20L14 9M8 20l6-6" stroke="#999" stroke-width="2"/>')}`);

define('task-bar', () => `<style>
:host{display:flex;height:40px;color:#fff;align-items:center;background:linear-gradient(90deg,#1f1f1f 0,#1f1f1f 22%,#2e2b29 28%,#3e3e3e 36%,#403d3d 58%,#3e3e3e 70%,#272321 76%,#2f2e2f 84%,#2b2828 92%,#1e1e1e 97%)}
button{height:40px;width:48px}
.g{width:4px;height:16px;border:1px solid #555;border-width:0 1px;margin:0 18px 0 5px}
.e{border-bottom:2px solid #76b9ed;width:40px;margin-right:5px}
.d{border-bottom:2px solid #76b9ed;background:#4b4b4b}
.r{margin-left:auto;display:flex;align-items:center}
.r button{width:24px}
.r .q{width:30px;margin-right:2px}
.r .q.first{margin-right:15px}
time{text-align:center;line-height:19px;width:72px;display:block}
.r .n{width:44px;margin-right:11px}
.r .g{margin:0 8px 0 0}
</style><button aria-label="开始">${ICON.start}</button><button aria-label="任务视图">${ICON.tasks}</button><div class="g"></div>
<button class="e" aria-label="Edge">${ICON.edge}</button><button class="d" aria-label="Doo Prime">${ICON.doo}</button>
<div class="r"><div class="g"></div><button class="q first" aria-label="Q">${ICON.q}</button><button aria-label="显示隐藏的图标">${ICON.chev}</button><button aria-label="网络">${ICON.net}</button><button aria-label="音量">${ICON.vol}</button><button>中</button><button class="q" aria-label="Q">${ICON.q}</button><time>12:04<br>2025/5/5</time><button class="n" aria-label="通知">${ICON.note}</button></div>`);

define('water-mark', () => {
  let s = '';
  for (let y = 178; y < 1300; y += 250) for (let x = 60; x < 1920; x += 250) s += `<text transform="translate(${x} ${y}) rotate(-34)">EAHub.cn</text>`;
  return `<style>
:host{position:absolute;inset:0;pointer-events:none;overflow:hidden}
text{font:700 38px Lato,"Liberation Sans",sans-serif;fill:rgba(255,255,255,.1);stroke:rgba(90,90,90,.3);stroke-width:1;stroke-linejoin:round}
</style><svg width="100%" height="100%" aria-hidden="true">${s}</svg>`;
});

define('trading-desktop', () => `<style>
:host{display:flex;flex-direction:column;height:100vh;background:linear-gradient(90deg,#000 0,#000 28%,#8a8080 32%,#777 45%,#000 80%)}
.w{flex:1;display:flex;flex-direction:column;margin:2px 2px 1px;min-height:0;background:#efefef}
.m{flex:1;display:flex;min-height:0}
aside{width:271px;display:flex;flex-direction:column;margin-bottom:7px;border-bottom:1px solid #a0a0a0}
.a{flex:12 1 0}.b{flex:13 1 0}
main{flex:1;display:flex;flex-direction:column;min-width:0}
price-chart{flex:1}
.t{border-left:2px solid #a0a0a0;border-top:2px solid #fff;padding-bottom:2px}
.t tab-strip{--pad:12px;--lead:13px;height:22px;border-bottom:1px solid #fff}
.t .v{margin-left:auto;display:flex;gap:13px;align-items:center;padding-right:12px}
</style><div class="w"><title-bar>112498808: DooPrime-Demo - 模拟帐户 - Doo Prime Limited - [USDJPY,M1]</title-bar><menu-bar></menu-bar><main-toolbars></main-toolbars>
<div class="m"><aside><dock-panel class="a" heading="市场报价: 07:04:21" tabs="交易品种|即时图"><market-watch></market-watch></dock-panel>
<dock-panel class="b" ruled heading="导航" tabs="常用|收藏夹"><nav-tree></nav-tree></dock-panel></aside>
<main><price-chart></price-chart><div class="t"><tab-strip active="9" tabs="XAUUSD,M5|EURUSD,M15|NZDUSD,H4|USDCAD,H4|USDCHF,H4|BTCUST,H4|ETHUST,Daily|GBPUSD,H4|AUDUSD,H4|USDJPY,M1"><div class="v">${svg(4, 6, '<path d="M4 0v6L0 3z" fill="#888"/>')}${svg(4, 6, '<path d="M0 0v6l4-3z" fill="#888"/>')}</div></tab-strip></div></main></div>
<terminal-panel></terminal-panel><status-bar></status-bar></div><task-bar></task-bar><water-mark></water-mark>`);
</script>
</body>
</html>
